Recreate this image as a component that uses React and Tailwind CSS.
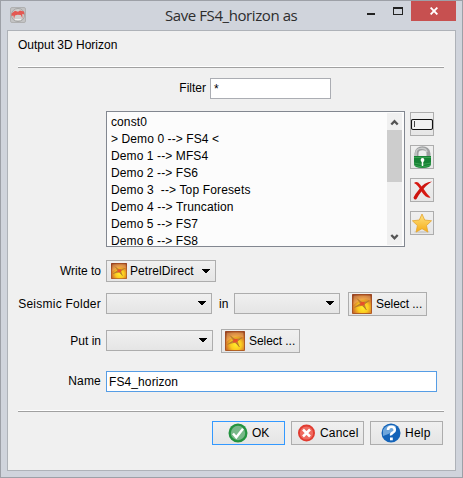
import React from "react";

const rows = [
  ["const0", "tracking-[0.1px]"],
  ["> Demo 0 --> FS4 <", "tracking-[0.1px]"],
  ["Demo 1 --> MFS4", "tracking-[0.1px]"],
  ["Demo 2 --> FS6", "tracking-[0.1px]"],
  ["Demo 3  --> Top Foresets", "tracking-[0.14px]"],
  ["Demo 4 --> Truncation", "tracking-[0.14px]"],
  ["Demo 5 --> FS7", "tracking-[0.1px]"],
  ["Demo 6 --> FS8", "tracking-[0.1px]"],
];

function AppIcon() {
  return (
    <svg width="16" height="16" viewBox="0 0 16 16" className="block">
      <rect x="0.5" y="0.5" width="15" height="15" rx="1.5" fill="#c3c3c4" stroke="#b0b0b1" />
      <circle cx="8" cy="8" r="6.5" fill="#d0d0cf" stroke="#a4a4a4" />
      <path d="M1.5 6.5 5 3.8 8 4.8 10 3.4 14 4.6 14.4 7.4 12.3 7 12.4 11.5 10.8 8 7.5 7.7 5 8.4 4 12 3.4 8.4 1.6 9Z" fill="#e45852" />
      <path d="M5 12.5h6" stroke="#eee" />
    </svg>
  );
}

function PetrelIcon({ size, id }) {
  return (
    <svg width={size} height={size} viewBox="0 0 20 20" className="block shrink-0">
      <defs>
        <radialGradient id={id} cx="0.55" cy="0.68" r="0.75">
          <stop offset="0" stopColor="#ffee2c" />
          <stop offset="0.35" stopColor="#fbcb20" />
          <stop offset="0.65" stopColor="#d47a2a" />
          <stop offset="1" stopColor="#8c361c" />
        </radialGradient>
      </defs>
      <rect width="20" height="20" rx="1" fill={`url(#${id})`} />
      <path d="M1.5 1.5h17v5C12 4 6 7 1.5 11Z" fill="#ffc877" opacity="0.4" />
      <path d="M5 4.5 10 7.8 17 6.8 12.8 10.2 14.5 16 10 11.8 2.5 13.5 7.8 9.5Z" fill="#c98a2c" />
      <path d="m8.5 7.8 4.3.2-.5 3.2-4.3.3Z" fill="#e8502a" />
      <path d="m5 4.5 4 4M17 6.8l-4 2.5M14.5 16l-3-4M2.5 13.5l5-3" stroke="#a5712f" strokeWidth="0.7" />
      <rect x="0.5" y="0.5" width="19" height="19" rx="1" fill="none" stroke="#a34e24" opacity="0.8" />
    </svg>
  );
}

function Arrow() {
  return (
    <svg width="8" height="5" viewBox="0 0 8 5" className="block shrink-0" shapeRendering="crispEdges">
      <path d="M0 0h8v1H7v1H6v1H5v1H3V3H2V2H1V1H0Z" fill="#000" />
    </svg>
  );
}

function Combo({ className }) {
  return (
    <div className={"flex h-[21px] shrink-0 items-center justify-end border border-[#adadad] bg-linear-to-b from-[#f0f0f0] to-[#e5e5e5] pr-[5px] " + className}>
      <Arrow />
    </div>
  );
}

function SelectButton({ id }) {
  return (
    <button className="flex h-6 w-[79px] shrink-0 items-center border border-[#adadad] bg-linear-to-b from-[#f0f0f0] to-[#e6e6e6] pl-[3px]">
      <PetrelIcon size={20} id={id} />
      <span className="ml-1 tracking-[-0.05px]">Select ...</span>
    </button>
  );
}

function SideButton({ children }) {
  return (
    <button className="flex h-6 w-6 items-center justify-center border border-[#adadad] bg-linear-to-b from-[#f0f0f0] to-[#e6e6e6]">
      {children}
    </button>
  );
}

function Divider() {
  return <div className="ml-[10px] h-[2px] w-[426px] border-t border-b border-t-white border-b-[#a0a0a0]" />;
}

export default function App() {
  return (
    <div className="flex h-[478px] w-[463px] flex-col overflow-hidden border border-[#9da0a7] bg-[#d0d4dc] font-['Liberation_Sans',Arial,sans-serif] text-[12px] leading-[17px] whitespace-pre text-black">
      <header className="flex h-[29px] shrink-0 items-start">
        <div className="mt-[6px] ml-[9px]"><AppIcon /></div>
        <h1 className="mt-[3px] ml-[139px] w-[135px] font-['Open_Sans','Noto_Sans',sans-serif] text-[15px] leading-[23px] tracking-[-0.42px] text-[#2d2d2d]">Save FS4_horizon as</h1>
        <div className="mt-[12px] ml-[67px] h-[2px] w-2 bg-[#222]" />
        <div className="mt-[6px] ml-[18px] h-2 w-[10px] border border-t-2 border-[#222]" />
        <div className="ml-2 flex h-5 w-[45px] items-center justify-center bg-[#c75050]">
          <svg width="8" height="8" viewBox="0 0 8 8"><path d="m.6.6 6.8 6.8M7.4.6.6 7.4" stroke="#fff" strokeWidth="1.9" /></svg>
        </div>
      </header>

      <main className="ml-[6px] h-[441px] w-[449px] shrink-0 border border-[#aeb2b8] bg-[#f0f0f0]">
        <div className="h-[35px] pt-[6px] pl-[10px]">Output 3D Horizon</div>
        <Divider />

        <div className="mt-[10px] flex h-[21px] items-center">
          <span className="w-[198px] text-right">Filter</span>
          <div className="ml-1 h-[21px] w-[121px] border border-[#abadb3] bg-white pl-[3px] leading-[20px]">*</div>
        </div>

        <div className="mt-3 flex">
          <div className="ml-[98px] flex h-[136px] w-[299px] overflow-hidden border border-[#828790] bg-[#fcfcfc]">
            <div className="h-[134px] flex-1 overflow-hidden pt-[2px] pl-1">
              {rows.map(([text, tracking]) => (
                <div key={text} className={"h-[17px] " + tracking}>{text}</div>
              ))}
            </div>
            <div className="mt-px mr-[2px] flex h-[132px] w-[15px] flex-col bg-[#f0f0f0]">
              <svg width="15" height="17" viewBox="0 0 15 17"><path d="m4.3 11.5 3.2-3.4 3.2 3.4" fill="none" stroke="#555" strokeWidth="2.3" /></svg>
              <div className="h-[52px] bg-[#cdcdcd]" />
              <svg width="15" height="17" viewBox="0 0 15 17" className="mt-auto"><path d="m4.3 7 3.2 3.4L10.7 7" fill="none" stroke="#555" strokeWidth="2.3" /></svg>
            </div>
          </div>
          <div className="mt-px ml-[5px] flex flex-col gap-[9px]">
            <SideButton>
              <svg width="22" height="22" viewBox="0 0 22 22" className="shrink-0"><rect x="0.5" y="6.5" width="21" height="10" rx="1.5" fill="#f1f1f1" stroke="#111" strokeWidth="1.1" /><path d="M3.5 8v6" stroke="#444" /></svg>
            </SideButton>
            <SideButton>
              <svg width="22" height="22" viewBox="0 0 22 22" className="shrink-0">
                <path d="M5.5 11V7.5c0-7 12-7 12 0V11" fill="none" stroke="#9d9fa0" strokeWidth="4" />
                <path d="M5 10V7c0-6 10-6 11-1" fill="none" stroke="#c9cbcb" strokeWidth="1.5" />
                <path d="M3 10h17v8q0 4-8.5 4T3 18Z" fill="#178235" />
                <path d="M3 11.5h17M3 17q8 3 17 0M4 19.5q7 3 15 0" fill="none" stroke="#3aa352" />
                <circle cx="11.5" cy="14" r="1.9" fill="#fff" /><path d="M11.5 15v5" stroke="#fff" strokeWidth="1.5" />
              </svg>
            </SideButton>
            <SideButton>
              <svg width="22" height="22" viewBox="0 0 22 22" className="shrink-0">
                <path d="M3 4Q6 1.500 9 5.500T13 10.500q2.500 4 6.500 8-4.500 1-8.700-5.500Q7 6 3 4Z" fill="#d71912" />
                <path d="M21 2.500Q13 3 8 10.500 4.500 14.500 2.500 18.500q.5 3 3 1.500 2-4 5-7.500Q15 6 21 2.500Z" fill="#ce1510" />
              </svg>
            </SideButton>
            <SideButton>
              <svg width="22" height="22" viewBox="0 0 22 22" className="shrink-0">
                <defs><linearGradient id="star" x2="0" y2="1"><stop stopColor="#ffe383" /><stop offset="1" stopColor="#f5ac16" /></linearGradient></defs>
                <ellipse cx="11" cy="20" rx="8" ry="1" fill="#cfcfcf" />
                <path d="m11 2 2.7 6 6.8.8-5 4.7 1.4 6.6L11 16.7l-5.9 3.4 1.3-6.6-5-4.7 6.9-.8Z" fill="url(#star)" stroke="#e5a42d" strokeWidth="0.8" strokeLinejoin="round" />
              </svg>
            </SideButton>
          </div>
        </div>

        <div className="mt-[13px] flex h-[22px] items-center">
          <span className="w-[93px] text-right">Write to</span>
          <button className="ml-[5px] flex h-[22px] w-[110px] items-center border border-[#adadad] bg-linear-to-b from-[#f0f0f0] to-[#e5e5e5] pl-1">
            <PetrelIcon size={16} id="petrel-a" />
            <span className="ml-[3px] w-[72px] text-left tracking-[0.08px]">PetrelDirect</span>
            <Arrow />
          </button>
        </div>

        <div className="mt-[10px] flex h-6 items-center">
          <span className="w-[93px] text-right tracking-[0.25px]">Seismic Folder</span>
          <Combo className="-mt-px ml-[5px] w-[106px]" />
          <span className="ml-[7px] w-[15px]">in</span>
          <Combo className="-mt-px w-[106px]" />
          <div className="ml-2"><SelectButton id="petrel-b" /></div>
        </div>

        <div className="mt-[13px] flex h-6 items-center">
          <span className="w-[93px] text-right">Put in</span>
          <Combo className="-mt-px ml-[5px] w-[107px]" />
          <div className="ml-2"><SelectButton id="petrel-c" /></div>
        </div>

        <div className="mt-[18px] flex h-[21px] items-center">
          <span className="w-[93px] text-right tracking-[0.2px]">Name</span>
          <div className="ml-[5px] h-[21px] w-[331px] border border-[#569de5] bg-white pl-[2px] leading-[20px] tracking-[0.1px]">FS4_horizon</div>
        </div>

        <div className="mt-[18px]"><Divider /></div>

        <div className="mt-[9px] ml-[204px] flex gap-[6px]">
          <button className="flex h-6 w-[73px] items-center border border-[#3399ff] bg-linear-to-b from-[#f0f0f0] to-[#e5e5e5] pl-[15px]">
            <svg width="20" height="20" viewBox="0 0 20 20" className="shrink-0">
              <circle cx="10" cy="10" r="9.5" fill="#249440" /><circle cx="10" cy="10" r="7.2" fill="#78b889" />
              <path d="m5 10.5 3.3 3.8L15 5.8" fill="none" stroke="#fff" strokeWidth="2.4" />
            </svg>
            <span className="ml-1 tracking-[-0.2px]">OK</span>
          </button>
          <button className="flex h-6 w-[73px] items-center border border-[#adadad] bg-linear-to-b from-[#f0f0f0] to-[#e5e5e5] pl-[5px]">
            <svg width="20" height="20" viewBox="0 0 20 20" className="shrink-0">
              <circle cx="9.5" cy="10" r="8.5" fill="#e13b30" /><circle cx="9.5" cy="10" r="6.6" fill="#ef6b60" />
              <path d="m6 6.5 7 7m0-7-7 7" stroke="#fff" strokeWidth="2.5" />
            </svg>
            <span className="ml-[3px] tracking-[0.2px]">Cancel</span>
          </button>
          <button className="flex h-6 w-[73px] items-center border border-[#adadad] bg-linear-to-b from-[#f0f0f0] to-[#e5e5e5] pl-[10px]">
            <svg width="20" height="20" viewBox="0 0 20 20" className="shrink-0">
              <circle cx="10" cy="10" r="9.5" fill="#1463b8" /><path d="M2 7q4-7 13-4 0 6-13 10Z" fill="#6da5db" />
              <path d="M7 7q0-3.300 3.400-3.300T13.800 7q0 1.600-2 2.700T10.200 12.400" fill="none" stroke="#fff" strokeWidth="2.6" /><rect x="9" y="14.5" width="2.8" height="2.8" fill="#fff" />
            </svg>
            <span className="ml-1 tracking-[0.25px]">Help</span>
          </button>
        </div>
      </main>
    </div>
  );
}
